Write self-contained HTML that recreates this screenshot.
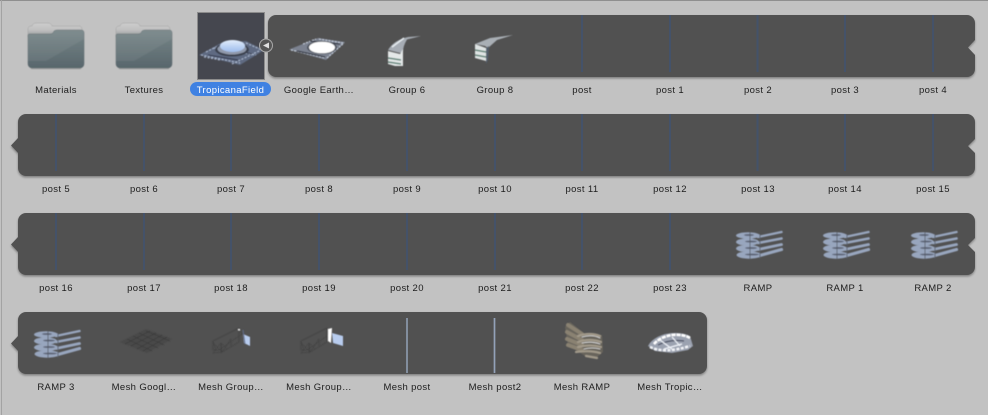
<!DOCTYPE html>
<html><head><meta charset="utf-8"><style>
html,body{margin:0;padding:0;background:#c2c2c2;width:988px;height:415px;overflow:hidden}
svg{display:block}
text{font-family:"Liberation Sans",sans-serif;font-size:9.500px;letter-spacing:.36px;fill:#1e1e1e;text-anchor:middle}
</style></head><body>
<svg width="988" height="415" viewBox="0 0 988 415" xmlns="http://www.w3.org/2000/svg">
<defs>
<linearGradient id="fb" x1="0" y1="0" x2="0" y2="1"><stop offset="0" stop-color="#778688"/><stop offset="1" stop-color="#58666c"/></linearGradient>
<linearGradient id="ft" x1="0" y1="0" x2="0" y2="1"><stop offset="0" stop-color="#cdcdcd"/><stop offset=".5" stop-color="#c0c0c0"/><stop offset="1" stop-color="#8f9597"/></linearGradient>
<linearGradient id="dome" x1="0" y1="0" x2="0" y2="1"><stop offset="0" stop-color="#e2edfb"/><stop offset="1" stop-color="#9dbcec"/></linearGradient>
<filter id="sh" x="-2%" y="-10%" width="104%" height="125%"><feDropShadow dx="0" dy="1.500" stdDeviation="1" flood-color="#000" flood-opacity=".35"/></filter>
<filter id="s" x="-10%" y="-10%" width="120%" height="120%"><feGaussianBlur stdDeviation=".4"/></filter>
<filter id="t" x="-5%" y="-20%" width="110%" height="140%"><feGaussianBlur stdDeviation=".2"/></filter>
<g id="folder">
<path d="M0 10V6a3 3 0 0 1 3-3h1q1-3 4-3h12q3 0 4 3h28a4 4 0 0 1 2 3v8H0z" fill="url(#ft)" stroke="#a0a0a0" stroke-width=".5"/>
<path d="M0 12q0-1 2-1h20q3 0 4-3q1-1 3-1h24q3 0 3 3v31a4 4 0 0 1-4 4H4a4 4 0 0 1-4-4z" fill="url(#fb)" stroke="#505d62" stroke-width=".4"/>
<path d="M18 38L56 16V10q0-3-3-3H29q-2 0-3 1q-1 3-4 3H2q-2 0-2 1v26z" fill="#fff" opacity=".06"/>
<path d="M3 45.600h50" stroke="#8b8f90" stroke-width="1" opacity=".9"/>
</g>
<g id="ramp">
<g stroke="#98a6be" fill="none" stroke-linecap="round">
<path d="M22 6L45.500 1" stroke-width="2.400"/><path d="M22 12L45.500 7.500" stroke-width="2.600"/><path d="M22 18.500L45.500 13.500" stroke-width="2.800"/><path d="M22 25L45.500 18.500" stroke-width="3.200"/>
</g>
<g fill="#98a6be">
<ellipse cx="12" cy="4.500" rx="12" ry="3.200"/><ellipse cx="11.500" cy="11" rx="11.500" ry="3.700"/><ellipse cx="12" cy="17.500" rx="12" ry="3.700"/><ellipse cx="13" cy="24" rx="12.500" ry="3.700"/>
</g>
<g fill="#5f6678"><ellipse cx="13" cy="4" rx="5" ry="1"/><ellipse cx="15" cy="10.500" rx="6" ry="1"/><ellipse cx="15" cy="17" rx="6" ry="1"/><ellipse cx="16" cy="23.500" rx="7" ry="1"/></g>
<path d="M14 1V28M24 3V28" stroke="#555a64" stroke-width=".8"/>
</g>
<g id="wire" fill="none" stroke="#3e3e3e" stroke-width=".5">
<path d="M0 13L26 0L29 6L6 22H0zM0 13L3 23M8 15L8 25M0 25L9 24L26 14M0 25L8 15L9 24L18 11L18 19M0 15L9 24M8 15L14 21M26 0L26 14"/>
</g>
</defs>
<rect width="988" height="415" fill="#c2c2c2"/>
<rect x="0" y="0" width="988" height="1" fill="#8f8f8f"/>
<rect x="1" y="0" width="1" height="415" fill="#a3a3a3"/>

<!-- panels -->
<g fill="#515151" filter="url(#sh)">
<path d="M276 15H967a8 8 0 0 1 8 8V40L968 47.500L975 55V69a8 8 0 0 1-8 8H276a8 8 0 0 1-8-8V23a8 8 0 0 1 8-8z"/>
<path d="M26 114H967a8 8 0 0 1 8 8V139L968 146L975 153V168a8 8 0 0 1-8 8H26a8 8 0 0 1-8-8V153L11 145.500L18 138V122a8 8 0 0 1 8-8z"/>
<path d="M26 213H967a8 8 0 0 1 8 8V238L968 245L975 252V267a8 8 0 0 1-8 8H26a8 8 0 0 1-8-8V252L11 244.500L18 237V221a8 8 0 0 1 8-8z"/>
<path d="M26 312H699a8 8 0 0 1 8 8V366a8 8 0 0 1-8 8H26a8 8 0 0 1-8-8V351L11 343.500L18 336V320a8 8 0 0 1 8-8z"/>
</g>

<!-- posts -->
<g stroke="#445269" stroke-width="2">
<path d="M582 15V72M670 15V72M757.500 15V72M845 15V72M933 15V72"/>
<path d="M56 114V171M144 114V171M231 114V171M319 114V171M407 114V171M495 114V171M582 114V171M670 114V171M757.500 114V171M845 114V171M933 114V171"/>
<path d="M56 213V270M144 213V270M231 213V270M319 213V270M407 213V270M495 213V270M582 213V270M670 213V270"/>
</g>
<path d="M407 318V373" stroke="#93a2b9" stroke-width="1.500"/>
<path d="M494.500 318V373" stroke="#93a2b9" stroke-width="1.700"/>

<!-- folders -->
<g filter="url(#s)"><use href="#folder" x="28" y="23"/><use href="#folder" x="116" y="23"/></g>

<!-- selected thumb -->
<rect x="197.500" y="12.500" width="67" height="67" fill="#45474f" stroke="#8c8c8c"/>
<g filter="url(#s)">
<path d="M199 55L221 43L246 41L264 50L240 65z" fill="#5f6b82"/>
<path d="M201 55L240 63M214 48L256 55M206 52L222 44M246 43L262 50M232 64L259 51M204 57L220 60" stroke="#aebbd2" stroke-width="1" stroke-dasharray="2 1.500" fill="none"/>
<path d="M208 55L238 60M218 46L252 54" stroke="#30364a" stroke-width="1" fill="none"/>
<ellipse cx="232" cy="49.500" rx="17" ry="7" fill="#3a404e"/>
<ellipse cx="232" cy="49" rx="14.500" ry="5.500" fill="#9099ab"/>
<ellipse cx="232.500" cy="46" rx="12.500" ry="6" fill="url(#dome)"/>
</g>
<!-- selected label -->
<rect x="190" y="82" width="81" height="14" rx="7" fill="#3f81e2"/>
<text x="230.500" y="93" style="fill:#fff" filter="url(#t)">TropicanaField</text>
<!-- arrow -->
<circle cx="266" cy="45.500" r="6.500" fill="#565656" stroke="#a9a9a9" stroke-width="1"/>
<path d="M263 45.500L269 42.500V48.500z" fill="#e0e0e0"/>

<g filter="url(#s)">
<!-- Google Earth -->
<path d="M289 49.500L318 38L345 42L326 60z" fill="#7b8290"/>
<path d="M291 50L325 58M303 44L316 39M319 39L343 43M327 58L344 43" stroke="#c3ccda" stroke-width="1.200" stroke-dasharray="2 1.200" fill="none"/>
<path d="M297 51L325 57M310 41L340 44" stroke="#30343f" stroke-width="1.200"/>
<ellipse cx="322" cy="47.500" rx="15" ry="6.500" fill="#4a4f5a"/>
<ellipse cx="322" cy="47.500" rx="13" ry="5.800" fill="#fff"/>

<!-- Group 6 -->
<path d="M388 50Q394 40 408 37L421 36L407 39.500Q403 46 403 52L400 53z" fill="#a6acb4"/>
<path d="M392 47L404 38" stroke="#e6ecf0" stroke-width="1.500"/>
<path d="M388 51L400 54L403 49L403 66L395 66L388 64z" fill="#e4e8e8"/>
<path d="M388 58L401 60M388 62L401 64" stroke="#5e8478" stroke-width="1.500"/>
<!-- Group 8 -->
<path d="M475 44L490 38L513 35L497 40L488 48L485 46z" fill="#a9afb5"/>
<path d="M475 44L486 48L486 61L475 58z" fill="#dfe4e4"/>
<path d="M475 50L486 52M475 55L486 57" stroke="#5e8478" stroke-width="1.400"/>
<path d="M486 48L489 46L488 60L486 64z" fill="#54606e"/>

<!-- ramps -->
<use href="#ramp" x="736" y="231"/><use href="#ramp" x="823" y="231"/><use href="#ramp" x="911" y="231"/><use href="#ramp" x="34" y="330"/>

<!-- Mesh Google -->
<path d="M120 342L146 329L172 339L147 353z" fill="#4a4a4a"/>
<path d="M125 344L150 331M131 346L156 333M137 349L162 335M143 351L167 337M127 339L152 351M133 336L158 348M139 333L164 345M146 331L170 341" stroke="#383838" stroke-width=".6" fill="none"/>

<!-- Mesh Groups -->
<use href="#wire" x="213" y="328"/><use href="#wire" x="301" y="328"/>
<path d="M243 334L250 337V346L244 343z" fill="#b8ccee"/><path d="M243 330L245 344" stroke="#5e6a88" stroke-width="1"/><rect x="238" y="329" width="2" height="1.500" fill="#e8e8e8"/>
<path d="M332 333L343 336V346L333 343z" fill="#b8ccee"/><path d="M328 329L332 328L331 343L328 341z" fill="#fff"/>

<!-- Mesh RAMP -->
<path d="M565 327L570 322L585 334L602 335L603 352L596 358L585 356L568 345z" fill="#706b60" opacity=".75"/>
<g stroke-linecap="round" fill="none">
<path d="M568 325L582 334M567 332L582 340M567 339L582 345M568 345L582 350" stroke="#8a8272" stroke-width="4"/>
<path d="M578 336Q590 332 600 336M578 342Q590 338 601 342M578 347Q590 344 601 347M576 352Q590 350 600 353M586 356L597 358" stroke="#a29a8a" stroke-width="2.200"/>
<path d="M582 337Q592 334 600 338M582 343Q592 341 600 344M584 349Q592 347 600 349" stroke="#e4e4e4" stroke-width=".8"/>
</g>

<!-- Mesh Tropicana -->
<path d="M648 346Q652 338 665 334Q680 331 690 336L693 346L688 350L672 353L655 351z" fill="#9ba2b0"/>
<path d="M654 344Q660 337 672 335Q684 334 690 338" stroke="#fff" stroke-width="2.500" fill="none" stroke-dasharray="4 1"/>
<path d="M650 347Q664 354 690 346" stroke="#f2f4f8" stroke-width="2.500" fill="none" stroke-dasharray="3 1.500"/>
<path d="M658 345Q670 339 684 341" stroke="#4a5064" stroke-width="1.200" fill="none"/>
<path d="M660 340L672 349M672 337L680 346M664 349L682 344" stroke="#eef2f8" stroke-width="1.200" fill="none"/>
</g>

<!-- labels -->
<g filter="url(#t)">
<text x="56" y="93">Materials</text><text x="144" y="93">Textures</text>
<text x="319" y="93">Google Earth…</text><text x="407" y="93">Group 6</text><text x="495" y="93">Group 8</text><text x="582" y="93">post</text><text x="670" y="93">post 1</text><text x="758" y="93">post 2</text><text x="845" y="93">post 3</text><text x="933" y="93">post 4</text>
<text x="56" y="192">post 5</text><text x="144" y="192">post 6</text><text x="231" y="192">post 7</text><text x="319" y="192">post 8</text><text x="407" y="192">post 9</text><text x="495" y="192">post 10</text><text x="582" y="192">post 11</text><text x="670" y="192">post 12</text><text x="758" y="192">post 13</text><text x="845" y="192">post 14</text><text x="933" y="192">post 15</text>
<text x="56" y="291">post 16</text><text x="144" y="291">post 17</text><text x="231" y="291">post 18</text><text x="319" y="291">post 19</text><text x="407" y="291">post 20</text><text x="495" y="291">post 21</text><text x="582" y="291">post 22</text><text x="670" y="291">post 23</text><text x="758" y="291">RAMP</text><text x="845" y="291">RAMP 1</text><text x="933" y="291">RAMP 2</text>
<text x="56" y="390">RAMP 3</text><text x="144" y="390">Mesh Googl…</text><text x="231" y="390">Mesh Group…</text><text x="319" y="390">Mesh Group…</text><text x="407" y="390">Mesh post</text><text x="495" y="390">Mesh post2</text><text x="582" y="390">Mesh RAMP</text><text x="670" y="390">Mesh Tropic…</text>
</g>
</svg>
</body></html>
